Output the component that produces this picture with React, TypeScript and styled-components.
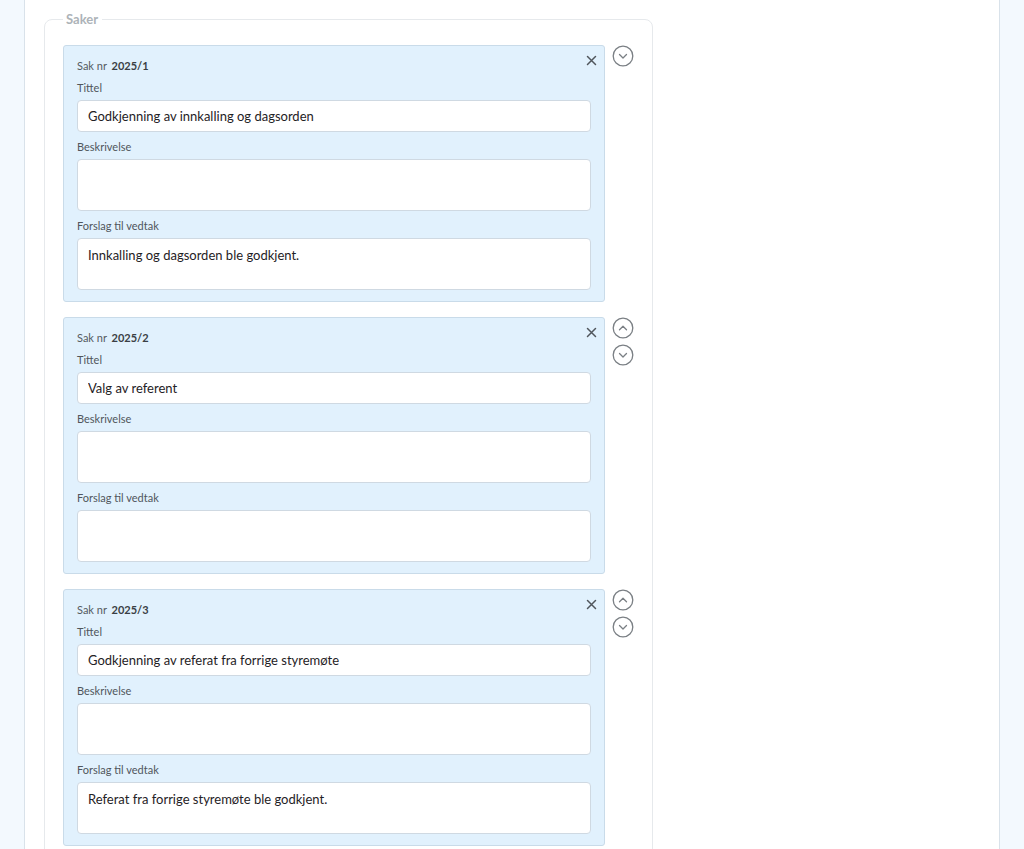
import React from 'react';
import styled, { createGlobalStyle } from 'styled-components';

const GlobalStyle = createGlobalStyle`
  body {
    margin: 0;
    background: #f3f9fe;
    font-family: Lato, "Open Sans", sans-serif;
  }
`;

const Page = styled.div`
  margin: 0 24px 0 24px;
  min-height: 100vh;
  background: #fff;
  border-left: 1px solid #d9e2ea;
  border-right: 1px solid #d9e2ea;
  padding: 11px 19px 0 19px;
  box-sizing: border-box;
`;

const Fieldset = styled.fieldset`
  width: 608px;
  box-sizing: border-box;
  margin: 0;
  padding: 18px 18px 16px 18px;
  border: 1px solid #e6e9ec;
  border-radius: 8px;
  display: flex;
  flex-direction: column;
  gap: 15px;
`;

const Legend = styled.legend`
  padding: 0 4px 0 3px;
  font-size: 13px;
  font-weight: 700;
  color: #adb3b8;
  line-height: 16px;
`;

const Row = styled.div`
  display: flex;
  align-items: flex-start;
  gap: 7px;
`;

const Card = styled.div`
  position: relative;
  width: 542px;
  box-sizing: border-box;
  background: #e1f1fd;
  border: 1px solid #c9dbe9;
  border-radius: 3px;
  padding: 13px 13px 11px 13px;
  display: flex;
  flex-direction: column;
  gap: 8px;
`;

const CaseNo = styled.div`
  font-size: 11px;
  line-height: 14px;
  color: #555b61;

  b {
    color: #3a3f44;
    font-weight: 700;
    margin-left: 2px;
  }
`;

const Field = styled.label`
  display: flex;
  flex-direction: column;
  gap: 5px;
`;

const Label = styled.span`
  font-size: 11px;
  line-height: 14px;
  color: #50565c;
`;

const Input = styled.input`
  height: 32px;
  box-sizing: border-box;
  border: 1px solid #cfd9e2;
  border-radius: 4px;
  background: #fff;
  padding: 0 10px;
  font-family: Lato, "Open Sans", sans-serif;
  font-size: 13px;
  color: #1f2225;
  outline: none;
`;

const TextArea = styled.textarea`
  height: 52px;
  box-sizing: border-box;
  border: 1px solid #cfd9e2;
  border-radius: 4px;
  background: #fff;
  padding: 8px 10px;
  font-family: Lato, "Open Sans", sans-serif;
  font-size: 13px;
  line-height: 16px;
  color: #1f2225;
  resize: none;
  outline: none;
`;

const CloseButton = styled.button`
  position: absolute;
  top: 7px;
  right: 6px;
  width: 14px;
  height: 14px;
  padding: 0;
  border: none;
  background: none;
  display: flex;
  align-items: center;
  justify-content: center;
  color: #50565c;
  cursor: pointer;
`;

const Controls = styled.div`
  display: flex;
  flex-direction: column;
  gap: 5px;
`;

const MoveButton = styled.button`
  width: 22px;
  height: 22px;
  padding: 0;
  border: none;
  background: none;
  color: #7a7f84;
  cursor: pointer;
  display: flex;
`;

const Chevron = ({ up }: { up?: boolean }) => (
  <svg width="22" height="22" viewBox="0 0 22 22" fill="none" stroke="currentColor" strokeWidth="1.3" strokeLinecap="round" strokeLinejoin="round">
    <circle cx="11" cy="11" r="9.8" />
    {up ? <path d="M7.5 12.8 11 9.3l3.5 3.5" /> : <path d="M7.5 9.5 11 13l3.5-3.5" />}
  </svg>
);

const Cross = () => (
  <svg width="11" height="11" viewBox="0 0 11 11" stroke="currentColor" strokeWidth="1.5" strokeLinecap="round">
    <path d="M1.5 1.5l8 8M9.5 1.5l-8 8" />
  </svg>
);

type Sak = { nr: string; tittel: string; beskrivelse: string; vedtak: string };

const saker: Sak[] = [
  { nr: '2025/1', tittel: 'Godkjenning av innkalling og dagsorden', beskrivelse: '', vedtak: 'Innkalling og dagsorden ble godkjent.' },
  { nr: '2025/2', tittel: 'Valg av referent', beskrivelse: '', vedtak: '' },
  { nr: '2025/3', tittel: 'Godkjenning av referat fra forrige styremøte', beskrivelse: '', vedtak: 'Referat fra forrige styremøte ble godkjent.' },
];

const App: React.FC = () => {
  return (
    <>
      <GlobalStyle />
      <Page>
        <Fieldset>
          <Legend>Saker</Legend>
          {saker.map((sak, i) => (
            <Row key={sak.nr}>
              <Card>
                <CloseButton aria-label="Fjern sak">
                  <Cross />
                </CloseButton>
                <CaseNo>
                  Sak nr <b>{sak.nr}</b>
                </CaseNo>
                <Field>
                  <Label>Tittel</Label>
                  <Input defaultValue={sak.tittel} />
                </Field>
                <Field>
                  <Label>Beskrivelse</Label>
                  <TextArea defaultValue={sak.beskrivelse} />
                </Field>
                <Field>
                  <Label>Forslag til vedtak</Label>
                  <TextArea defaultValue={sak.vedtak} />
                </Field>
              </Card>
              <Controls>
                {i > 0 && (
                  <MoveButton aria-label="Flytt opp">
                    <Chevron up />
                  </MoveButton>
                )}
                <MoveButton aria-label="Flytt ned">
                  <Chevron />
                </MoveButton>
              </Controls>
            </Row>
          ))}
        </Fieldset>
      </Page>
    </>
  );
};

export default App;
